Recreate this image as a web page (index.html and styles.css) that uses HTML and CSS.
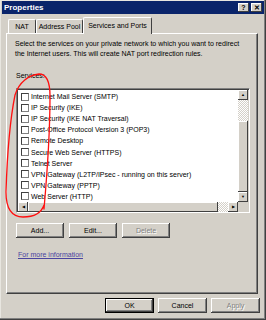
FILE: index.html
```html
<!DOCTYPE html>
<html lang="en">
<head>
    <meta charset="UTF-8">
    <title>Properties</title>
    <link rel="stylesheet" href="styles.css">
</head>
<body>
    <div class="window">
        <div class="titlebar">
            <span class="title">Properties</span>
            <div class="title-buttons">
                <span class="tbtn">?</span>
                <span class="tbtn">&#x2715;</span>
            </div>
        </div>

        <div class="tabs">
            <div class="tab tab-nat">NAT</div>
            <div class="tab tab-pool">Address Pool</div>
            <div class="tab active">Services and Ports</div>
        </div>

        <div class="panel">
            <p class="desc">Select the services on your private network to which you want to redirect the Internet users. This will create NAT port redirection rules.</p>
            <div class="label">Services:</div>

            <div class="listbox">
                <div class="list-main">
                    <ul class="items">
                        <li><span class="check"></span>Internet Mail Server (SMTP)</li>
                        <li><span class="check"></span>IP Security (IKE)</li>
                        <li><span class="check"></span>IP Security (IKE NAT Traversal)</li>
                        <li><span class="check"></span>Post-Office Protocol Version 3 (POP3)</li>
                        <li><span class="check"></span>Remote Desktop</li>
                        <li><span class="check"></span>Secure Web Server (HTTPS)</li>
                        <li><span class="check"></span>Telnet Server</li>
                        <li><span class="check"></span>VPN Gateway (L2TP/IPsec - running on this server)</li>
                        <li><span class="check"></span>VPN Gateway (PPTP)</li>
                        <li><span class="check"></span>Web Server (HTTP)</li>
                    </ul>
                    <div class="vscroll">
                        <span class="arrow">&#9650;</span>
                        <span class="track"></span>
                        <span class="thumb"></span>
                        <span class="arrow">&#9660;</span>
                    </div>
                </div>
                <div class="hscroll">
                    <span class="arrow">&#9664;</span>
                    <span class="thumb"></span>
                    <span class="track"></span>
                    <span class="arrow">&#9654;</span>
                    <span class="corner"></span>
                </div>
            </div>

            <div class="actions">
                <button class="btn">Add...</button>
                <button class="btn">Edit...</button>
                <button class="btn" disabled>Delete</button>
            </div>

            <a class="more" href="#">For more information</a>
        </div>

        <div class="footer">
            <button class="btn default">OK</button>
            <button class="btn">Cancel</button>
            <button class="btn" disabled>Apply</button>
        </div>
    </div>

    <svg class="scribble" viewBox="0 0 266 320" width="266" height="320">
        <path d="M44 209 C47 175 50 135 50 96 C50 82 46 74 39 74 C29 75 19 82 15 95 C10 120 7 160 6 192 C6 210 13 217 23 217 C33 217 41 214 44 205"
              fill="none" stroke="#ff1010" stroke-width="1.3" stroke-linecap="round"/>
    </svg>
</body>
</html>
```

FILE: styles.css
```css
* {
  margin: 0;
  padding: 0;
  box-sizing: border-box;
}

body {
  font-family: 'Liberation Sans', Arial, sans-serif;
  font-size: 7px;
  color: #000;
  background-color: #d4d0c8;
  width: 266px;
  height: 320px;
  overflow: hidden;
}

.window {
  position: relative;
  width: 266px;
  height: 320px;
  padding: 1px 2px 2px 1px;
  background-color: #d4d0c8;
  box-shadow: inset -1px -1px #404040, inset -2px -2px #808080, inset 1px 1px #e8e6e0;
  display: flex;
  flex-direction: column;
}

.titlebar {
  height: 13px;
  margin-left: 1px;
  background-color: #0a246a;
  color: #fff;
  display: flex;
  align-items: center;
  justify-content: space-between;
  padding: 0 2px 0 2px;
}

.title {
  font-weight: bold;
  font-size: 8px;
}

.title-buttons {
  display: flex;
  gap: 2px;
}

.tbtn {
  width: 11px;
  height: 9px;
  background-color: #d4d0c8;
  color: #000;
  font-size: 7px;
  font-weight: bold;
  line-height: 9px;
  text-align: center;
  box-shadow: inset -1px -1px #404040, inset 1px 1px #fff;
}

.tabs {
  display: flex;
  align-items: flex-end;
  height: 19px;
  padding-left: 7px;
}

.tab {
  height: 14px;
  line-height: 13px;
  text-align: center;
  border-top: 1px solid #fff;
  border-left: 1px solid #fff;
  border-right: 1px solid #404040;
  border-radius: 2px 2px 0 0;
  white-space: nowrap;
}

.tab-nat {
  width: 28px;
}

.tab-pool {
  width: 47px;
}

.tab.active {
  width: 69px;
  height: 17px;
  margin-bottom: -1px;
  line-height: 15px;
  background-color: #d4d0c8;
  position: relative;
  z-index: 1;
}

.panel {
  height: 261px;
  margin: 0 6px 0 5px;
  padding: 5px 8px 0 8px;
  border-top: 1px solid #fff;
  border-left: 1px solid #fff;
  border-right: 1px solid #404040;
  border-bottom: 1px solid #404040;
  box-shadow: inset -1px -1px #808080;
  display: flex;
  flex-direction: column;
  align-items: flex-start;
}

.desc {
  line-height: 10px;
  width: 230px;
}

.label {
  margin-top: 12px;
  margin-left: 1px;
  line-height: 10px;
}

.listbox {
  margin-top: 7px;
  margin-left: 1px;
  width: 234px;
  height: 125px;
  background-color: #fff;
  border-top: 1px solid #808080;
  border-left: 1px solid #808080;
  border-right: 1px solid #fff;
  border-bottom: 1px solid #fff;
  box-shadow: inset 1px 1px #404040, inset -1px -1px #d4d0c8;
  padding: 1px;
  display: flex;
  flex-direction: column;
}

.list-main {
  flex: 1;
  display: flex;
}

.items {
  flex: 1;
  list-style: none;
  padding: 1px 0 0 3px;
  overflow: hidden;
}

.items li {
  height: 11.1px;
  display: flex;
  align-items: center;
  gap: 2px;
  white-space: nowrap;
}

.check {
  width: 8px;
  height: 8px;
  flex-shrink: 0;
  background-color: #fff;
  border: 1px solid #404040;
  border-right-color: #808080;
  border-bottom-color: #808080;
}

.vscroll {
  width: 10px;
  display: flex;
  flex-direction: column;
}

.arrow {
  width: 10px;
  height: 10px;
  flex-shrink: 0;
  background-color: #d4d0c8;
  box-shadow: inset -1px -1px #404040, inset 1px 1px #fff;
  font-size: 4px;
  line-height: 10px;
  text-align: center;
  color: #000;
}

.track {
  background-color: #eeece8;
  background-image: repeating-conic-gradient(#d4d0c8 0 25%, #fff 0 50%);
  background-size: 2px 2px;
}

.vscroll .track {
  height: 21px;
}

.vscroll .thumb {
  flex: 1;
  background-color: #d4d0c8;
  box-shadow: inset -1px -1px #404040, inset 1px 1px #fff;
}

.hscroll {
  height: 10px;
  display: flex;
}

.hscroll .thumb {
  width: 190px;
  background-color: #d4d0c8;
  box-shadow: inset -1px -1px #404040, inset 1px 1px #fff;
}

.hscroll .track {
  flex: 1;
}

.corner {
  width: 10px;
  background-color: #d4d0c8;
}

.actions {
  display: flex;
  gap: 5px;
  margin-top: 10px;
  margin-left: 1px;
}

.btn {
  width: 48px;
  height: 15px;
  font-family: inherit;
  font-size: 7px;
  color: #000;
  background-color: #d4d0c8;
  border: none;
  box-shadow: inset -1px -1px #404040, inset 1px 1px #fff, inset -2px -2px #808080;
}

.btn:disabled {
  color: #808080;
  text-shadow: 1px 1px #fff;
}

.btn.default {
  box-shadow: inset 0 0 0 1px #000, inset -2px -2px #404040, inset 2px 2px #fff, inset -3px -3px #808080;
}

.more {
  margin-top: 12px;
  margin-left: 3px;
  line-height: 10px;
  color: #4b44a0;
}

.footer {
  display: flex;
  justify-content: flex-end;
  gap: 4px;
  margin-top: 4px;
  padding-right: 4px;
}

.footer .btn {
  width: 49px;
}

.scribble {
  position: absolute;
  left: 0;
  top: 0;
  pointer-events: none;
}
```
